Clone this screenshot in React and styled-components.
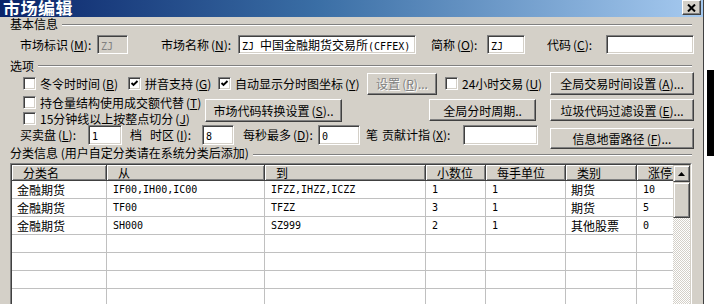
import styled, { createGlobalStyle } from "styled-components";

const GlobalStyle = createGlobalStyle`
  body {
    margin: 0;
    background: #fff;
    font-family: "Noto Sans CJK SC", sans-serif;
    font-size: 12px;
    color: #000;
  }
`;

const Page = styled.div`
  display: flex;
  width: 714px;
  height: 304px;
  overflow: hidden;
`;

const Window = styled.div`
  flex: none;
  width: 703px;
  height: 304px;
  background: #d4d0c8;
  border-right: 1px solid #404040;
  display: flex;
  flex-direction: column;
  overflow: hidden;
`;

const Side = styled.div`
  flex: 1;
  background: #fff;
  display: flex;
  flex-direction: column;
`;

const SideBlock = styled.div`
  height: 86px;
  margin: 70px 0 0 3px;
  background: #000;
`;

const TitleBar = styled.div`
  flex: none;
  height: 17px;
  display: flex;
  align-items: flex-start;
  justify-content: space-between;
  padding: 0 2px 0 3px;
  background: linear-gradient(to right, #0a246a, #3a6ea5 45%, #a6caf0);
  overflow: hidden;
`;

const Title = styled.span`
  color: #fff;
  font-weight: bold;
  font-size: 17px;
  line-height: 15px;
  height: 16px;
  letter-spacing: 0.5px;
  overflow: hidden;
`;

const CloseBtn = styled.div`
  width: 19px;
  height: 15px;
  box-sizing: border-box;
  display: flex;
  align-items: center;
  justify-content: center;
  background: #d4d0c8;
  border: 1px solid;
  border-color: #fff #404040 #404040 #fff;
  box-shadow: inset -1px -1px #808080;
`;

const Content = styled.div`
  display: flex;
  flex-direction: column;
  padding: 0 11px 0 10px;
`;

const SectionHead = styled.div`
  display: flex;
  align-items: center;
  height: ${(p) => p.$h}px;
  margin-top: ${(p) => p.$mt || 0}px;
  white-space: nowrap;
  line-height: ${(p) => p.$h}px;
`;

const Rule = styled.div`
  flex: 1;
  height: 0;
  margin: ${(p) => p.$dy || 0}px 0 0 4px;
  border-top: 1px solid #808080;
  border-bottom: 1px solid #fff;
`;

const Row = styled.div`
  display: flex;
  align-items: ${(p) => p.$align || "center"};
  height: ${(p) => p.$h}px;
  margin-top: ${(p) => p.$mt || 0}px;
  padding-left: ${(p) => p.$pl || 0}px;
  white-space: nowrap;
`;

const Label = styled.span`
  flex: none;
  width: ${(p) => p.$w}px;
  margin-left: ${(p) => p.$ml || 0}px;
  line-height: ${(p) => p.$lh || 16}px;
`;

const Acc = styled.span`
  margin-left: 2px;
  & u {
    text-underline-offset: 1px;
  }
`;

const Field = styled.div`
  flex: none;
  box-sizing: border-box;
  width: ${(p) => p.$w}px;
  height: ${(p) => p.$h || 19}px;
  border: 1px solid;
  border-color: #808080 #fff #fff #808080;
  box-shadow: inset 1px 1px #404040, inset -1px -1px #d4d0c8;
  background: ${(p) => (p.$disabled ? "#d4d0c8" : "#fff")};
  color: ${(p) => (p.$disabled ? "#808080" : "#000")};
  padding-left: 3px;
  line-height: ${(p) => (p.$h || 19) - 2}px;
  overflow: hidden;
  white-space: nowrap;
`;

const Mono = styled.span`
  font-family: "DejaVu Sans Mono", "Liberation Mono", monospace;
  font-size: 10px;
`;

const Button = styled.div`
  flex: none;
  box-sizing: border-box;
  width: ${(p) => p.$w}px;
  height: ${(p) => p.$h || 22}px;
  margin-left: ${(p) => p.$ml || 0}px;
  margin-top: ${(p) => p.$mt || 0}px;
  display: flex;
  align-items: center;
  justify-content: center;
  background: #d4d0c8;
  border: 1px solid;
  border-color: #fff #404040 #404040 #fff;
  box-shadow: inset -1px -1px #808080;
  color: ${(p) => (p.$disabled ? "#808080" : "#000")};
  text-shadow: ${(p) => (p.$disabled ? "1px 1px #fff" : "none")};
  white-space: nowrap;
`;

const CheckItem = styled.div`
  flex: none;
  width: ${(p) => p.$w}px;
  margin-left: ${(p) => p.$ml || 0}px;
  display: flex;
  align-items: center;
  gap: 4px;
  height: 15px;
`;

const Box = styled.div`
  flex: none;
  box-sizing: border-box;
  width: 13px;
  height: 13px;
  border: 1px solid;
  border-color: #808080 #fff #fff #808080;
  box-shadow: inset 1px 1px #404040, inset -1px -1px #d4d0c8;
  background: #fff;
  display: flex;
  align-items: center;
  justify-content: center;
`;

const CheckColumn = styled.div`
  flex: none;
  width: ${(p) => p.$w}px;
  display: flex;
  flex-direction: column;
  gap: 1px;
`;

const TableOuter = styled.div`
  margin-top: ${(p) => p.$mt}px;
  width: 682px;
  height: 150px;
  box-sizing: border-box;
  border: 1px solid;
  border-color: #808080 #fff #fff #808080;
`;

const TableInner = styled.div`
  height: 100%;
  box-sizing: border-box;
  border: 1px solid;
  border-color: #404040 #d4d0c8 #d4d0c8 #404040;
  background: #fff;
  display: flex;
`;

const Grid = styled.div`
  flex: 1;
  overflow: hidden;
  display: grid;
  grid-template-columns: 95px 158px 161px 60px 80px 71px 60px;
  grid-template-rows: 16px;
  grid-auto-rows: 18px;
  align-content: start;
`;

const HeadCell = styled.div`
  box-sizing: border-box;
  background: #d4d0c8;
  box-shadow: inset 1px 1px #fff, inset -1px -1px #808080;
  border-right: 1px solid #404040;
  border-bottom: 1px solid #404040;
  padding-left: 11px;
  line-height: 15px;
  white-space: nowrap;
`;

const Cell = styled.div`
  box-sizing: border-box;
  border-right: 1px solid #c0c0c0;
  border-bottom: 1px solid #c0c0c0;
  padding-left: ${(p) => (p.$mono ? 6 : 5)}px;
  line-height: 17px;
  white-space: nowrap;
  overflow: hidden;
  font-family: ${(p) =>
    p.$mono
      ? `"DejaVu Sans Mono", "Liberation Mono", monospace`
      : `"Noto Sans CJK SC", sans-serif`};
  font-size: ${(p) => (p.$mono ? 10 : 12)}px;
`;

const ScrollBar = styled.div`
  flex: none;
  width: 17px;
  display: flex;
  flex-direction: column;
  background: repeating-conic-gradient(#fff 0 25%, #d4d0c8 0 50%) 0 0 / 2px 2px;
`;

const ScrollPart = styled.div`
  flex: none;
  box-sizing: border-box;
  height: ${(p) => p.$h}px;
  background: #d4d0c8;
  border: 1px solid;
  border-color: #d4d0c8 #404040 #404040 #d4d0c8;
  box-shadow: inset 1px 1px #fff, inset -1px -1px #808080;
  display: flex;
  align-items: center;
  justify-content: center;
`;

function A({ k }) {
  return (
    <Acc>
      (<u>{k}</u>)
    </Acc>
  );
}

function Check({ w, ml, checked, children }) {
  return (
    <CheckItem $w={w} $ml={ml}>
      <Box>
        {checked && (
          <svg width="9" height="9" viewBox="0 0 9 9">
            <polyline
              points="1.5,4 3.5,6 7.5,2"
              fill="none"
              stroke="#000"
              strokeWidth="1.9"
            />
          </svg>
        )}
      </Box>
      <span>{children}</span>
    </CheckItem>
  );
}

const columns = ["分类名", "从", "到", "小数位", "每手单位", "类别", "涨停价"];

const rows = [
  ["金融期货", "IF00,IH00,IC00", "IFZZ,IHZZ,ICZZ", "1", "1", "期货", "10"],
  ["金融期货", "TF00", "TFZZ", "3", "1", "期货", "5"],
  ["金融期货", "SH000", "SZ999", "2", "1", "其他股票", "0"],
  ["", "", "", "", "", "", ""],
  ["", "", "", "", "", "", ""],
  ["", "", "", "", "", "", ""],
  ["", "", "", "", "", "", ""],
];

const monoCols = [false, true, true, true, true, false, true];

export default function App() {
  return (
    <Page>
      <GlobalStyle />
      <Window>
        <TitleBar>
          <Title>市场编辑</Title>
          <CloseBtn>
            <svg width="9" height="8" viewBox="0 0 9 8">
              <path d="M1 0.5 L8 7.5 M8 0.5 L1 7.5" stroke="#000" strokeWidth="2" />
            </svg>
          </CloseBtn>
        </TitleBar>

        <Content>
          <SectionHead $h={14}>
            基本信息
            <Rule $dy={1} />
          </SectionHead>

          <Row $h={19} $mt={4} $pl={10}>
            <Label $w={77}>
              市场标识<A k="M" />:
            </Label>
            <Field $w={31} $disabled>
              <Mono>ZJ</Mono>
            </Field>
            <Label $w={77} $ml={33}>
              市场名称<A k="N" />:
            </Label>
            <Field $w={178}>
              <Mono>ZJ </Mono>中国金融期货交易所<Mono>(CFFEX)</Mono>
            </Field>
            <Label $w={56} $ml={15}>
              简称<A k="O" />:
            </Label>
            <Field $w={38}>
              <Mono>ZJ</Mono>
            </Field>
            <Label $w={59} $ml={22}>
              代码<A k="C" />:
            </Label>
            <Field $w={88} />
          </Row>

          <SectionHead $h={12} $mt={6}>
            选项
            <Rule />
          </SectionHead>

          <Row $h={23} $pl={13}>
            <Check w={105}>
              冬令时时间<A k="B" />
            </Check>
            <Check w={90} checked>
              拼音支持<A k="G" />
            </Check>
            <Check w={149} checked>
              自动显示分时图坐标<A k="Y" />
            </Check>
            <Button $w={70} $h={22} $disabled>
              设置<A k="R" />...
            </Button>
            <Check w={105} ml={8}>
              24小时交易<A k="U" />
            </Check>
            <Button $w={144} $h={23}>
              全局交易时间设置<A k="A" />...
            </Button>
          </Row>

          <Row $h={30} $pl={13}>
            <CheckColumn $w={182}>
              <Check w={182}>
                持仓量结构使用成交额代替<A k="T" />
              </Check>
              <Check w={182}>
                15分钟线以上按整点切分<A k="J" />
              </Check>
            </CheckColumn>
            <Button $w={137} $h={23}>
              市场代码转换设置<A k="S" />..
            </Button>
            <Button $w={107} $ml={87}>
              全局分时周期..
            </Button>
            <Button $w={144} $ml={14}>
              垃圾代码过滤设置<A k="E" />...
            </Button>
          </Row>

          <Row $h={20} $pl={10} $align="flex-start">
            <Label $w={68} $lh={20}>
              买卖盘<A k="L" />:
            </Label>
            <Field $w={34} $h={20}>
              <Mono>1</Mono>
            </Field>
            <Label $w={20} $ml={8} $lh={20}>
              档
            </Label>
            <Label $w={52} $lh={20}>
              时区<A k="I" />:
            </Label>
            <Field $w={32} $h={20}>
              <Mono>8</Mono>
            </Field>
            <Label $w={75} $ml={9} $lh={20}>
              每秒最多<A k="D" />:
            </Label>
            <Field $w={42} $h={20}>
              <Mono>0</Mono>
            </Field>
            <Label $w={16} $ml={6} $lh={20}>
              笔
            </Label>
            <Label $w={81} $lh={20}>
              贡献计指<A k="X" />:
            </Label>
            <Field $w={75} $h={20} />
            <Button $w={144} $h={21} $ml={12} $mt={3}>
              信息地雷路径<A k="F" />...
            </Button>
          </Row>

          <SectionHead $h={16}>
            分类信息 (用户自定分类请在系统分类后添加)
            <Rule $dy={3} />
          </SectionHead>

          <TableOuter $mt={2}>
            <TableInner>
              <Grid>
                {columns.map((c) => (
                  <HeadCell key={c}>{c}</HeadCell>
                ))}
                {rows.map((r, i) =>
                  r.map((v, j) => (
                    <Cell key={`${i}-${j}`} $mono={monoCols[j]}>
                      {v}
                    </Cell>
                  ))
                )}
              </Grid>
              <ScrollBar>
                <ScrollPart $h={17}>
                  <svg width="7" height="4" viewBox="0 0 7 4">
                    <path d="M3.5 0 L7 4 L0 4 Z" fill="#000" />
                  </svg>
                </ScrollPart>
                <ScrollPart $h={36} />
              </ScrollBar>
            </TableInner>
          </TableOuter>
        </Content>
      </Window>
      <Side>
        <SideBlock />
      </Side>
    </Page>
  );
}
